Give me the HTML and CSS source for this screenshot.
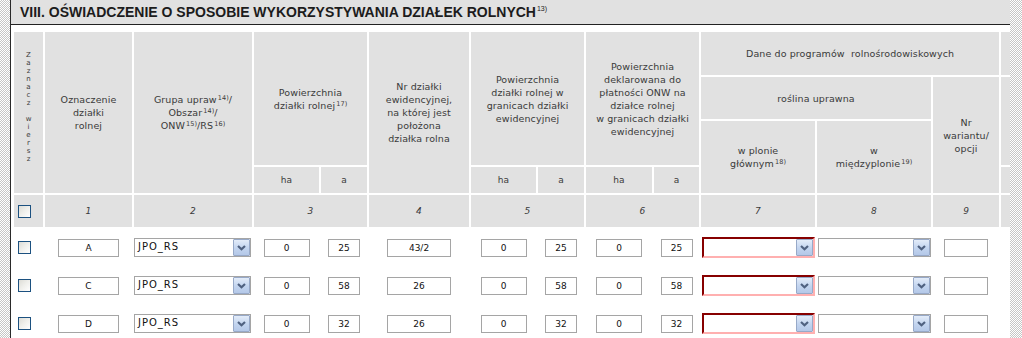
FILE: index.html
```html
<!DOCTYPE html>
<html lang="pl">
<head>
<meta charset="utf-8">
<title>VIII. Oświadczenie o sposobie wykorzystywania działek rolnych</title>
<link rel="stylesheet" href="styles.css">
</head>
<body>
<div class="page">
  <div class="edge edge-left"></div>
  <main class="main">
    <h1 class="title">VIII. OŚWIADCZENIE O SPOSOBIE WYKORZYSTYWANIA DZIAŁEK ROLNYCH<sup>13)</sup></h1>
    <div class="tablewrap">
      <table class="grid">
        <colgroup>
          <col class="c29"><col class="c87"><col class="c118"><col class="c65"><col class="c46">
          <col class="c100"><col class="c65"><col class="c46"><col class="c66"><col class="c45">
          <col class="c114"><col class="c114"><col class="c66"><col class="c100">
        </colgroup>
        <thead>
          <tr class="r1">
            <th rowspan="4" class="vert"><span>Zaznacz wiersz</span></th>
            <th rowspan="4">Oznaczenie<br>działki<br>rolnej</th>
            <th rowspan="4">Grupa upraw<sup>14)</sup>/<br>Obszar<sup>14)</sup>/<br>ONW<sup>15)</sup>/RS<sup>16)</sup></th>
            <th colspan="2" rowspan="3">Powierzchnia<br>działki rolnej<sup>17)</sup></th>
            <th rowspan="4">Nr działki<br>ewidencyjnej,<br>na której jest<br>położona<br>działka rolna</th>
            <th colspan="2" rowspan="3">Powierzchnia<br>działki rolnej w<br>granicach działki<br>ewidencyjnej</th>
            <th colspan="2" rowspan="3">Powierzchnia<br>deklarowana do<br>płatności ONW na<br>działce rolnej<br>w granicach działki<br>ewidencyjnej</th>
            <th colspan="3">Dane do programów &nbsp;rolnośrodowiskowych</th>
            <th></th>
          </tr>
          <tr class="r2">
            <th colspan="2">roślina uprawna</th>
            <th rowspan="3">Nr<br>wariantu/<br>opcji</th>
            <th rowspan="2"></th>
          </tr>
          <tr class="r3">
            <th rowspan="2">w plonie<br>głównym<sup>18)</sup></th>
            <th rowspan="2">w<br>międzyplonie<sup>19)</sup></th>
          </tr>
          <tr class="r4">
            <th class="unit">ha</th><th class="unit">a</th>
            <th class="unit">ha</th><th class="unit">a</th>
            <th class="unit">ha</th><th class="unit">a</th>
            <th></th>
          </tr>
          <tr class="r5">
            <th class="cb"><input type="checkbox" class="chk" aria-label="Zaznacz wszystkie"></th>
            <th class="num">1</th>
            <th class="num">2</th>
            <th class="num" colspan="2">3</th>
            <th class="num">4</th>
            <th class="num" colspan="2">5</th>
            <th class="num" colspan="2">6</th>
            <th class="num">7</th>
            <th class="num">8</th>
            <th class="num">9</th>
            <th></th>
          </tr>
        </thead>
        <tbody>
          <tr class="row">
            <td class="cb"><input type="checkbox" class="chk" aria-label="Zaznacz wiersz A"></td>
            <td><input class="inp w61" value="A" readonly></td>
            <td class="left"><div class="sel w117"><span class="val">JPO_RS</span><span class="btn"><svg viewBox="0 0 15 15" width="15" height="15"><polyline points="4,6 7.5,9.2 11,6" fill="none" stroke="#4f6180" stroke-width="2.2"/></svg></span></div></td>
            <td><input class="inp w46" value="0" readonly></td>
            <td><input class="inp w32" value="25" readonly></td>
            <td><input class="inp w64" value="43/2" readonly></td>
            <td><input class="inp w46" value="0" readonly></td>
            <td><input class="inp w32" value="25" readonly></td>
            <td><input class="inp w46" value="0" readonly></td>
            <td><input class="inp w32" value="25" readonly></td>
            <td class="left"><div class="sel sel-err w113"><span class="val"></span><span class="btn"><svg viewBox="0 0 15 15" width="15" height="15"><polyline points="4,6 7.5,9.2 11,6" fill="none" stroke="#4f6180" stroke-width="2.2"/></svg></span></div></td>
            <td class="left"><div class="sel w113"><span class="val"></span><span class="btn"><svg viewBox="0 0 15 15" width="15" height="15"><polyline points="4,6 7.5,9.2 11,6" fill="none" stroke="#4f6180" stroke-width="2.2"/></svg></span></div></td>
            <td><input class="inp w44" value="" readonly></td>
            <td></td>
          </tr>
          <tr class="row">
            <td class="cb"><input type="checkbox" class="chk" aria-label="Zaznacz wiersz C"></td>
            <td><input class="inp w61" value="C" readonly></td>
            <td class="left"><div class="sel w117"><span class="val">JPO_RS</span><span class="btn"><svg viewBox="0 0 15 15" width="15" height="15"><polyline points="4,6 7.5,9.2 11,6" fill="none" stroke="#4f6180" stroke-width="2.2"/></svg></span></div></td>
            <td><input class="inp w46" value="0" readonly></td>
            <td><input class="inp w32" value="58" readonly></td>
            <td><input class="inp w64" value="26" readonly></td>
            <td><input class="inp w46" value="0" readonly></td>
            <td><input class="inp w32" value="58" readonly></td>
            <td><input class="inp w46" value="0" readonly></td>
            <td><input class="inp w32" value="58" readonly></td>
            <td class="left"><div class="sel sel-err w113"><span class="val"></span><span class="btn"><svg viewBox="0 0 15 15" width="15" height="15"><polyline points="4,6 7.5,9.2 11,6" fill="none" stroke="#4f6180" stroke-width="2.2"/></svg></span></div></td>
            <td class="left"><div class="sel w113"><span class="val"></span><span class="btn"><svg viewBox="0 0 15 15" width="15" height="15"><polyline points="4,6 7.5,9.2 11,6" fill="none" stroke="#4f6180" stroke-width="2.2"/></svg></span></div></td>
            <td><input class="inp w44" value="" readonly></td>
            <td></td>
          </tr>
          <tr class="row">
            <td class="cb"><input type="checkbox" class="chk" aria-label="Zaznacz wiersz D"></td>
            <td><input class="inp w61" value="D" readonly></td>
            <td class="left"><div class="sel w117"><span class="val">JPO_RS</span><span class="btn"><svg viewBox="0 0 15 15" width="15" height="15"><polyline points="4,6 7.5,9.2 11,6" fill="none" stroke="#4f6180" stroke-width="2.2"/></svg></span></div></td>
            <td><input class="inp w46" value="0" readonly></td>
            <td><input class="inp w32" value="32" readonly></td>
            <td><input class="inp w64" value="26" readonly></td>
            <td><input class="inp w46" value="0" readonly></td>
            <td><input class="inp w32" value="32" readonly></td>
            <td><input class="inp w46" value="0" readonly></td>
            <td><input class="inp w32" value="32" readonly></td>
            <td class="left"><div class="sel sel-err w113"><span class="val"></span><span class="btn"><svg viewBox="0 0 15 15" width="15" height="15"><polyline points="4,6 7.5,9.2 11,6" fill="none" stroke="#4f6180" stroke-width="2.2"/></svg></span></div></td>
            <td class="left"><div class="sel w113"><span class="val"></span><span class="btn"><svg viewBox="0 0 15 15" width="15" height="15"><polyline points="4,6 7.5,9.2 11,6" fill="none" stroke="#4f6180" stroke-width="2.2"/></svg></span></div></td>
            <td><input class="inp w44" value="" readonly></td>
            <td></td>
          </tr>
        </tbody>
      </table>
    </div>
  </main>
  <div class="edge edge-right"></div>
</div>
</body>
</html>
```

FILE: styles.css
```css
* { box-sizing: border-box; }

html, body {
  margin: 0;
  padding: 0;
  background: #fff;
}

body {
  font-family: "DejaVu Sans", Verdana, sans-serif;
  color: #333;
}

.page {
  display: flex;
  height: 338px;
  overflow: hidden;
}

.edge {
  flex: none;
  background: repeating-conic-gradient(#c6c6c6 0 25%, #ffffff 0 50%) 0 0 / 2px 2px;
}

.edge-left { width: 10px; }
.edge-right { width: 12px; }

.main {
  flex: none;
  width: 1000px;
  border-left: 1px solid #2a2a2a;
  overflow: hidden;
}

.title {
  margin: 0;
  height: 25px;
  padding-left: 9px;
  background: #e1e1e1;
  border-bottom: 1px solid #222;
  font: bold 14px/24px "Liberation Sans", Arial, sans-serif;
  color: #1c1c1c;
  white-space: nowrap;
}

.title sup {
  font-size: 7px;
  font-weight: normal;
  line-height: 0;
  vertical-align: 6px;
  margin-left: 1px;
}

.tablewrap {
  padding: 5px 0 0 1px;
}

.grid {
  border-collapse: separate;
  border-spacing: 2px;
  table-layout: fixed;
  width: 1091px;
}

.c29 { width: 29px; }
.c45 { width: 45px; }
.c46 { width: 46px; }
.c65 { width: 65px; }
.c66 { width: 66px; }
.c87 { width: 87px; }
.c100 { width: 100px; }
.c114 { width: 114px; }
.c118 { width: 118px; }

.grid th {
  background: #e1e1e1;
  font-weight: normal;
  font-size: 9.5px;
  line-height: 13px;
  letter-spacing: 0.1px;
  color: #3a3a3a;
  padding: 0;
  text-align: center;
  vertical-align: middle;
  overflow: hidden;
}

.grid th sup {
  font-size: 6.5px;
  line-height: 0;
  vertical-align: 3px;
  margin-left: 1px;
}

.r1 { height: 43px; }
.r2 { height: 42px; }
.r3 { height: 44px; }
.r4 { height: 26px; }
.r5 { height: 32px; }
.row { height: 36px; }

.grid th.vert span {
  display: inline-block;
  writing-mode: vertical-lr;
  text-orientation: upright;
  font-size: 7px;
  line-height: 8px;
  letter-spacing: 0;
  margin-top: -8px;
}

.grid th.unit {
  font-size: 9px;
}

.grid th.num {
  font-size: 9px;
  font-style: italic;
}

.grid td {
  padding: 0;
  text-align: center;
  vertical-align: middle;
  background: #fff;
}

.grid .cb {
  text-align: left;
}

.grid td.left {
  text-align: left;
}

.chk {
  appearance: none;
  -webkit-appearance: none;
  display: block;
  width: 13px;
  height: 13px;
  margin: 0 0 0 4px;
  border: 1px solid #1c5180;
  background: linear-gradient(135deg, #dcdcd6 0%, #eeeeea 45%, #ffffff 100%);
}

.inp {
  display: inline-block;
  height: 18px;
  margin: 0;
  padding: 0;
  border: 1px solid #a5a5a5;
  background: #fff;
  font: 9px/16px "DejaVu Sans", Verdana, sans-serif;
  color: #111;
  text-align: center;
  vertical-align: middle;
  outline: none;
}

.w32 { width: 32px; }
.w44 { width: 44px; }
.w46 { width: 46px; }
.w61 { width: 61px; }
.w64 { width: 64px; }

.sel {
  display: flex;
  height: 19px;
  border: 1px solid #a5a5a5;
  background: #fff;
}

.sel.w117 { width: 117px; }
.sel.w113 { width: 113px; margin-left: 1px; }

.sel-err {
  height: 21px;
  border: 2px solid;
  border-color: #870000 #ffb0b0 #ffb0b0 #870000;
}

.val {
  flex: 1;
  padding-left: 3px;
  font: 10px/15px "DejaVu Sans", Verdana, sans-serif;
  letter-spacing: 1px;
  color: #111;
  white-space: nowrap;
  overflow: hidden;
}

.btn {
  flex: none;
  width: 17px;
  display: flex;
  align-items: center;
  justify-content: center;
  border: 1px solid #97a9c8;
  border-radius: 1px;
  background: linear-gradient(#e3ecf9, #c2d4ef 55%, #b4c8e8);
}

.btn svg { display: block; }
```
